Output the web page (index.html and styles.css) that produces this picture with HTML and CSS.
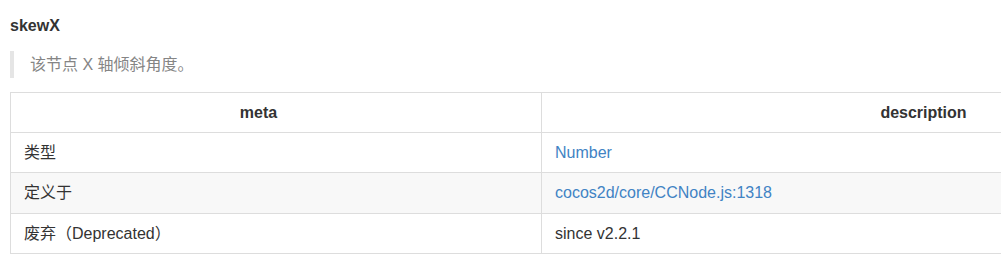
FILE: index.html
```html
<!DOCTYPE html>
<html lang="zh-CN">
<head>
<meta charset="utf-8">
<title>skewX</title>
<link rel="stylesheet" href="styles.css">
</head>
<body>
<section class="doc">
  <h4 class="prop-title">skewX</h4>
  <blockquote class="prop-desc">该节点 X 轴倾斜角度。</blockquote>
  <div class="table-wrap">
    <table class="meta-table">
      <colgroup>
        <col class="col-meta">
        <col class="col-desc">
      </colgroup>
      <thead>
        <tr><th>meta</th><th>description</th></tr>
      </thead>
      <tbody>
        <tr><td>类型</td><td><a class="link" href="#">Number</a></td></tr>
        <tr><td>定义于</td><td><a class="link" href="#">cocos2d/core/CCNode.js:1318</a></td></tr>
        <tr><td>废弃（Deprecated）</td><td>since v2.2.1</td></tr>
      </tbody>
    </table>
  </div>
</section>
</body>
</html>
```

FILE: styles.css
```css
html, body {
  margin: 0;
  padding: 0;
  overflow: hidden;
  background: #fff;
}
body {
  font-family: "Liberation Sans", Arial, "Noto Sans CJK SC", sans-serif;
  font-size: 16px;
  color: #333;
}
.doc {
  padding: 12px 0 0 10px;
}
.prop-title {
  margin: 0;
  font-size: 16px;
  font-weight: bold;
  line-height: 27px;
}
.prop-desc {
  margin: 12px 0 0 0;
  padding: 0 16px;
  border-left: 4px solid #e5e5e5;
  color: #858585;
  line-height: 27px;
}
.table-wrap {
  margin-top: 14px;
  overflow: hidden;
}
.meta-table {
  border-collapse: collapse;
  table-layout: fixed;
  width: 1330px;
}
.col-meta { width: 531px; }
.col-desc { width: 799px; }
.meta-table th,
.meta-table td {
  border: 1px solid #ddd;
  padding: 6px 13px;
  line-height: 27.2px;
}
.meta-table th {
  font-weight: bold;
  text-align: center;
  padding-right: 48px;
}
.meta-table td {
  text-align: left;
}
.meta-table tbody tr:nth-child(2n) {
  background: #f8f8f8;
}
.link {
  color: #4183c4;
  text-decoration: none;
}
```
